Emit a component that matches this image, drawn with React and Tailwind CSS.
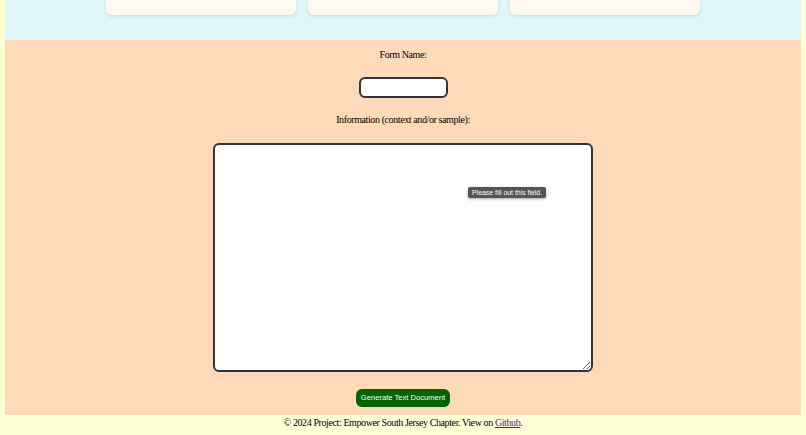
const Card = () => (
  <div className="h-[15px] w-[190px] rounded-b-md bg-[#fff9f0] shadow-[0_1px_4px_rgba(0,0,0,0.12)]" />
);

export default function App() {
  return (
    <div className="min-h-[435px] bg-[#ffffd6] px-[5px] font-['Liberation_Serif',serif] text-[10px] tracking-[-0.04em] text-black">
      {/* feature strip, scrolled mostly out of view */}
      <section className="flex h-[40px] justify-center gap-[12px] bg-[#e0f7fa]">
        <Card />
        <Card />
        <Card />
      </section>

      <section className="relative flex h-[375px] flex-col items-center bg-[#ffdab9] pt-[7px]">
        <label className="leading-[15px]">Form Name:</label>
        <input
          type="text"
          className="mt-[15px] h-[21px] w-[89px] rounded-[6px] border-2 border-[#333] bg-white"
        />
        <label className="mt-[14px] leading-[15px]">
          Information (context and/or sample):
        </label>
        <textarea className="mt-[16px] h-[229px] w-[380px] resize rounded-[6px] border-2 border-[#333] bg-white" />

        {/* browser validation bubble */}
        <div className="absolute left-[463px] top-[147px] rounded-[2px] bg-[#555] px-[4px] font-['Liberation_Sans',sans-serif] text-[6.9px] leading-[11px] tracking-normal text-white shadow-[0_1px_3px_rgba(0,0,0,0.35)]">
          Please fill out this field.
        </div>

        <button className="mt-[17px] h-[18px] rounded-[6px] bg-[#006400] px-[5px] font-['Liberation_Sans',sans-serif] text-[7.6px] tracking-normal text-white">
          Generate Text Document
        </button>
      </section>

      <footer className="h-[20px] pt-[2px] text-center leading-[12px]">
        <p>
          © 2024 Project: Empower South Jersey Chapter. View on{" "}
          <a href="#" className="text-[#551a8b] underline">
            Github
          </a>
          .
        </p>
      </footer>
    </div>
  );
}
